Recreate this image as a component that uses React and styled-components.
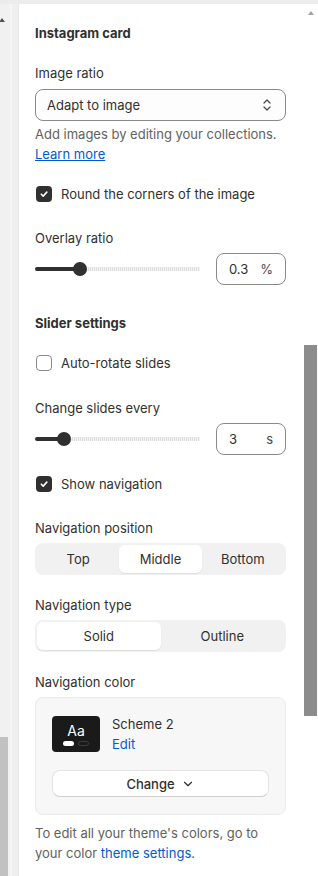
import React from 'react';
import styled, { createGlobalStyle } from 'styled-components';
import { ChevronDown } from 'lucide-react';

const GlobalStyle = createGlobalStyle`
  html, body {
    margin: 0;
    padding: 0;
    background: #fff;
  }
  body {
    font-family: Inter, "Noto Sans", sans-serif;
    font-size: 13px;
    line-height: 20px;
    color: #303030;
  }
`;

const SelectIcon = () => (
  <svg width="10" height="14" viewBox="0 0 10 14" fill="none">
    <path d="M2 5l3-3 3 3" stroke="#4a4a4a" strokeWidth="1.3" strokeLinecap="round" strokeLinejoin="round" />
    <path d="M2 9l3 3 3-3" stroke="#4a4a4a" strokeWidth="1.3" strokeLinecap="round" strokeLinejoin="round" />
  </svg>
);

const CheckIcon = () => (
  <svg width="10" height="10" viewBox="0 0 10 10" fill="none">
    <path d="M2.3 5.2l1.9 1.9 3.6-4" stroke="#fff" strokeWidth="1.6" strokeLinecap="round" strokeLinejoin="round" />
  </svg>
);

const Checkbox = ({ checked, label, mt }) => (
  <CheckRow $mt={mt}>
    <Box $checked={checked}>{checked && <CheckIcon />}</Box>
    <span>{label}</span>
  </CheckRow>
);

const RangeField = ({ label, fill, value, suffix, mt }) => (
  <Field $mt={mt}>
    <Label>{label}</Label>
    <SliderRow>
      <Track>
        <Fill style={{ width: fill }} />
        <Thumb />
        <Rest />
      </Track>
      <ValueBox>
        <span>{value}</span>
        <Suffix>{suffix}</Suffix>
      </ValueBox>
    </SliderRow>
  </Field>
);

const Segmented = ({ options, selected }) => (
  <SegGroup $count={options.length}>
    {options.map((o) => (
      <SegItem key={o} $active={o === selected}>{o}</SegItem>
    ))}
  </SegGroup>
);

const App = () => {
  return (
    <>
      <GlobalStyle />
      <Frame>
        <TopBand />
        <Main>
          <LeftStrip>
            <LeftTrack>
              <UpArrow $left />
              <LeftThumb />
            </LeftTrack>
            <LeftEdge />
          </LeftStrip>

          <Panel>
            <Heading>Instagram card</Heading>

            <Field $mt={20}>
              <Label>Image ratio</Label>
              <Select>
                <span>Adapt to image</span>
                <SelectIcon />
              </Select>
              <Help>
                Add images by editing your collections.
                <br />
                <Link href="#" $underline>Learn more</Link>
              </Help>
            </Field>

            <Checkbox checked label="Round the corners of the image" mt={20} />

            <RangeField label="Overlay ratio" fill={45} value="0.3" suffix="%" mt={24} />

            <Heading $mt={28}>Slider settings</Heading>

            <Checkbox label="Auto-rotate slides" mt={20} />

            <RangeField label="Change slides every" fill={29} value="3" suffix="s" mt={25} />

            <Checkbox checked label="Show navigation" mt={19} />

            <Field $mt={24}>
              <Label>Navigation position</Label>
              <Segmented options={['Top', 'Middle', 'Bottom']} selected="Middle" />
            </Field>

            <Field $mt={20}>
              <Label>Navigation type</Label>
              <Segmented options={['Solid', 'Outline']} selected="Solid" />
            </Field>

            <Field $mt={20}>
              <Label>Navigation color</Label>
              <Card>
                <SchemeRow>
                  <Swatch>
                    <SwatchText>Aa</SwatchText>
                    <Pills>
                      <Pill $solid />
                      <Pill />
                    </Pills>
                  </Swatch>
                  <SchemeInfo>
                    <span>Scheme 2</span>
                    <Link href="#">Edit</Link>
                  </SchemeInfo>
                </SchemeRow>
                <ChangeButton>
                  Change
                  <ChevronDown size={14} strokeWidth={2} />
                </ChangeButton>
              </Card>
            </Field>

            <Help $mt={8}>
              To edit all your theme's colors, go to your color{' '}
              <Link href="#">theme settings</Link>.
            </Help>
          </Panel>

          <RightScroll>
            <UpArrow />
            <RightThumb />
          </RightScroll>
        </Main>
      </Frame>
    </>
  );
};

export default App;

const Frame = styled.div`
  display: flex;
  flex-direction: column;
  height: 876px;
  overflow: hidden;
`;

const TopBand = styled.div`
  height: 4px;
  background: #ececec;
  flex-shrink: 0;
`;

const Main = styled.div`
  display: flex;
  flex: 1;
  min-height: 0;
`;

const LeftStrip = styled.div`
  display: flex;
  width: 19px;
  flex-shrink: 0;
`;

const LeftTrack = styled.div`
  width: 10px;
  background: #f1f1f1;
  display: flex;
  flex-direction: column;
`;

const LeftEdge = styled.div`
  width: 6px;
  background: #efefef;
  border-left: 2px solid #f6f6f6;
  border-right: 1px solid #e7e7e7;
`;

const LeftThumb = styled.div`
  margin-top: auto;
  width: 8px;
  height: 139px;
  background: #c1c1c1;
`;

const UpArrow = styled.div`
  width: 0;
  height: 0;
  border-left: 3px solid transparent;
  border-right: 3px solid transparent;
  border-bottom: 4px solid ${(p) => (p.$left ? '#505050' : '#a3a3a3')};
  margin: ${(p) => (p.$left ? '14px 0 0 -1px' : '7px auto 0')};
`;

const RightScroll = styled.div`
  width: 15px;
  flex-shrink: 0;
  display: flex;
  flex-direction: column;
`;

const RightThumb = styled.div`
  margin: 330px 1px 0;
  height: 371px;
  background: #8c8c8c;
`;

const Panel = styled.div`
  flex: 1;
  min-width: 0;
  padding: 19px 17px 0 16px;
  display: flex;
  flex-direction: column;
`;

const Heading = styled.div`
  font-weight: 650;
  margin-top: ${(p) => p.$mt || 0}px;
`;

const Field = styled.div`
  display: flex;
  flex-direction: column;
  margin-top: ${(p) => p.$mt || 0}px;
`;

const Label = styled.div`
  color: #303030;
`;

const Select = styled.div`
  margin-top: 6px;
  height: 32px;
  box-sizing: border-box;
  border: 1px solid #8a8a8a;
  border-radius: 8px;
  background: #fdfdfd;
  padding: 0 13px 0 11px;
  display: flex;
  align-items: center;
  justify-content: space-between;
`;

const Help = styled.div`
  color: #616161;
  margin-top: ${(p) => (p.$mt !== undefined ? p.$mt : 3)}px;
`;

const Link = styled.a`
  color: #005bd3;
  text-decoration: ${(p) => (p.$underline ? 'underline' : 'none')};
`;

const CheckRow = styled.div`
  display: flex;
  align-items: center;
  gap: 9px;
  padding-left: 1px;
  margin-top: ${(p) => p.$mt || 0}px;
`;

const Box = styled.div`
  width: 16px;
  height: 16px;
  box-sizing: border-box;
  border-radius: 4px;
  display: flex;
  align-items: center;
  justify-content: center;
  background: ${(p) => (p.$checked ? '#303030' : '#fff')};
  border: ${(p) => (p.$checked ? 'none' : '1px solid #8a8a8a')};
`;

const SliderRow = styled.div`
  margin-top: 5px;
  display: flex;
  align-items: center;
  gap: 16px;
`;

const Track = styled.div`
  flex: 1;
  display: flex;
  align-items: center;
  height: 14px;
`;

const Fill = styled.div`
  height: 4px;
  background: #303030;
  border-radius: 2px 0 0 2px;
`;

const Thumb = styled.div`
  width: 14px;
  height: 14px;
  border-radius: 50%;
  background: #303030;
  margin: 0 -7px;
  position: relative;
  z-index: 1;
  flex-shrink: 0;
`;

const Rest = styled.div`
  flex: 1;
  height: 4px;
  background: repeating-linear-gradient(
    to right,
    #dedede 0,
    #dedede 1px,
    #f3f3f3 1px,
    #f3f3f3 2px
  );
`;

const ValueBox = styled.div`
  width: 70px;
  height: 32px;
  box-sizing: border-box;
  border: 1px solid #8a8a8a;
  border-radius: 8px;
  padding: 0 12px;
  display: flex;
  align-items: center;
  justify-content: space-between;
`;

const Suffix = styled.span`
  color: #4a4a4a;
`;

const SegGroup = styled.div`
  margin-top: 5px;
  display: grid;
  grid-template-columns: repeat(${(p) => p.$count}, 1fr);
  background: #f1f1f1;
  border-radius: 8px;
  padding: 2px;
`;

const SegItem = styled.div`
  height: 28px;
  display: flex;
  align-items: center;
  justify-content: center;
  border-radius: 6px;
  background: ${(p) => (p.$active ? '#fff' : 'transparent')};
  box-shadow: ${(p) => (p.$active ? '0 1px 1px rgba(0,0,0,0.08)' : 'none')};
`;

const Card = styled.div`
  margin-top: 5px;
  background: #f7f7f7;
  border: 1px solid #ebebeb;
  border-radius: 8px;
  padding: 18px 16px 17px;
`;

const SchemeRow = styled.div`
  display: flex;
  gap: 12px;
`;

const Swatch = styled.div`
  width: 48px;
  height: 36px;
  border-radius: 4px;
  background: #1a1a1a;
  display: flex;
  flex-direction: column;
  align-items: center;
  justify-content: center;
  gap: 2px;
`;

const SwatchText = styled.div`
  color: #fff;
  font-size: 14px;
  line-height: 16px;
`;

const Pills = styled.div`
  display: flex;
  gap: 4px;
`;

const Pill = styled.div`
  width: 11px;
  height: 5px;
  box-sizing: border-box;
  border-radius: 3px;
  background: ${(p) => (p.$solid ? '#fff' : 'transparent')};
  border: ${(p) => (p.$solid ? 'none' : '1px solid #3c3c3c')};
`;

const SchemeInfo = styled.div`
  display: flex;
  flex-direction: column;
  margin-top: -2px;
`;

const ChangeButton = styled.button`
  margin-top: 16px;
  width: 100%;
  height: 27px;
  box-sizing: border-box;
  background: #fff;
  border: 1px solid #e3e3e3;
  border-bottom-color: #cfcfcf;
  border-radius: 8px;
  display: flex;
  align-items: center;
  justify-content: center;
  gap: 6px;
  font-family: inherit;
  font-size: 13px;
  font-weight: 500;
  color: #303030;
  cursor: pointer;
`;
